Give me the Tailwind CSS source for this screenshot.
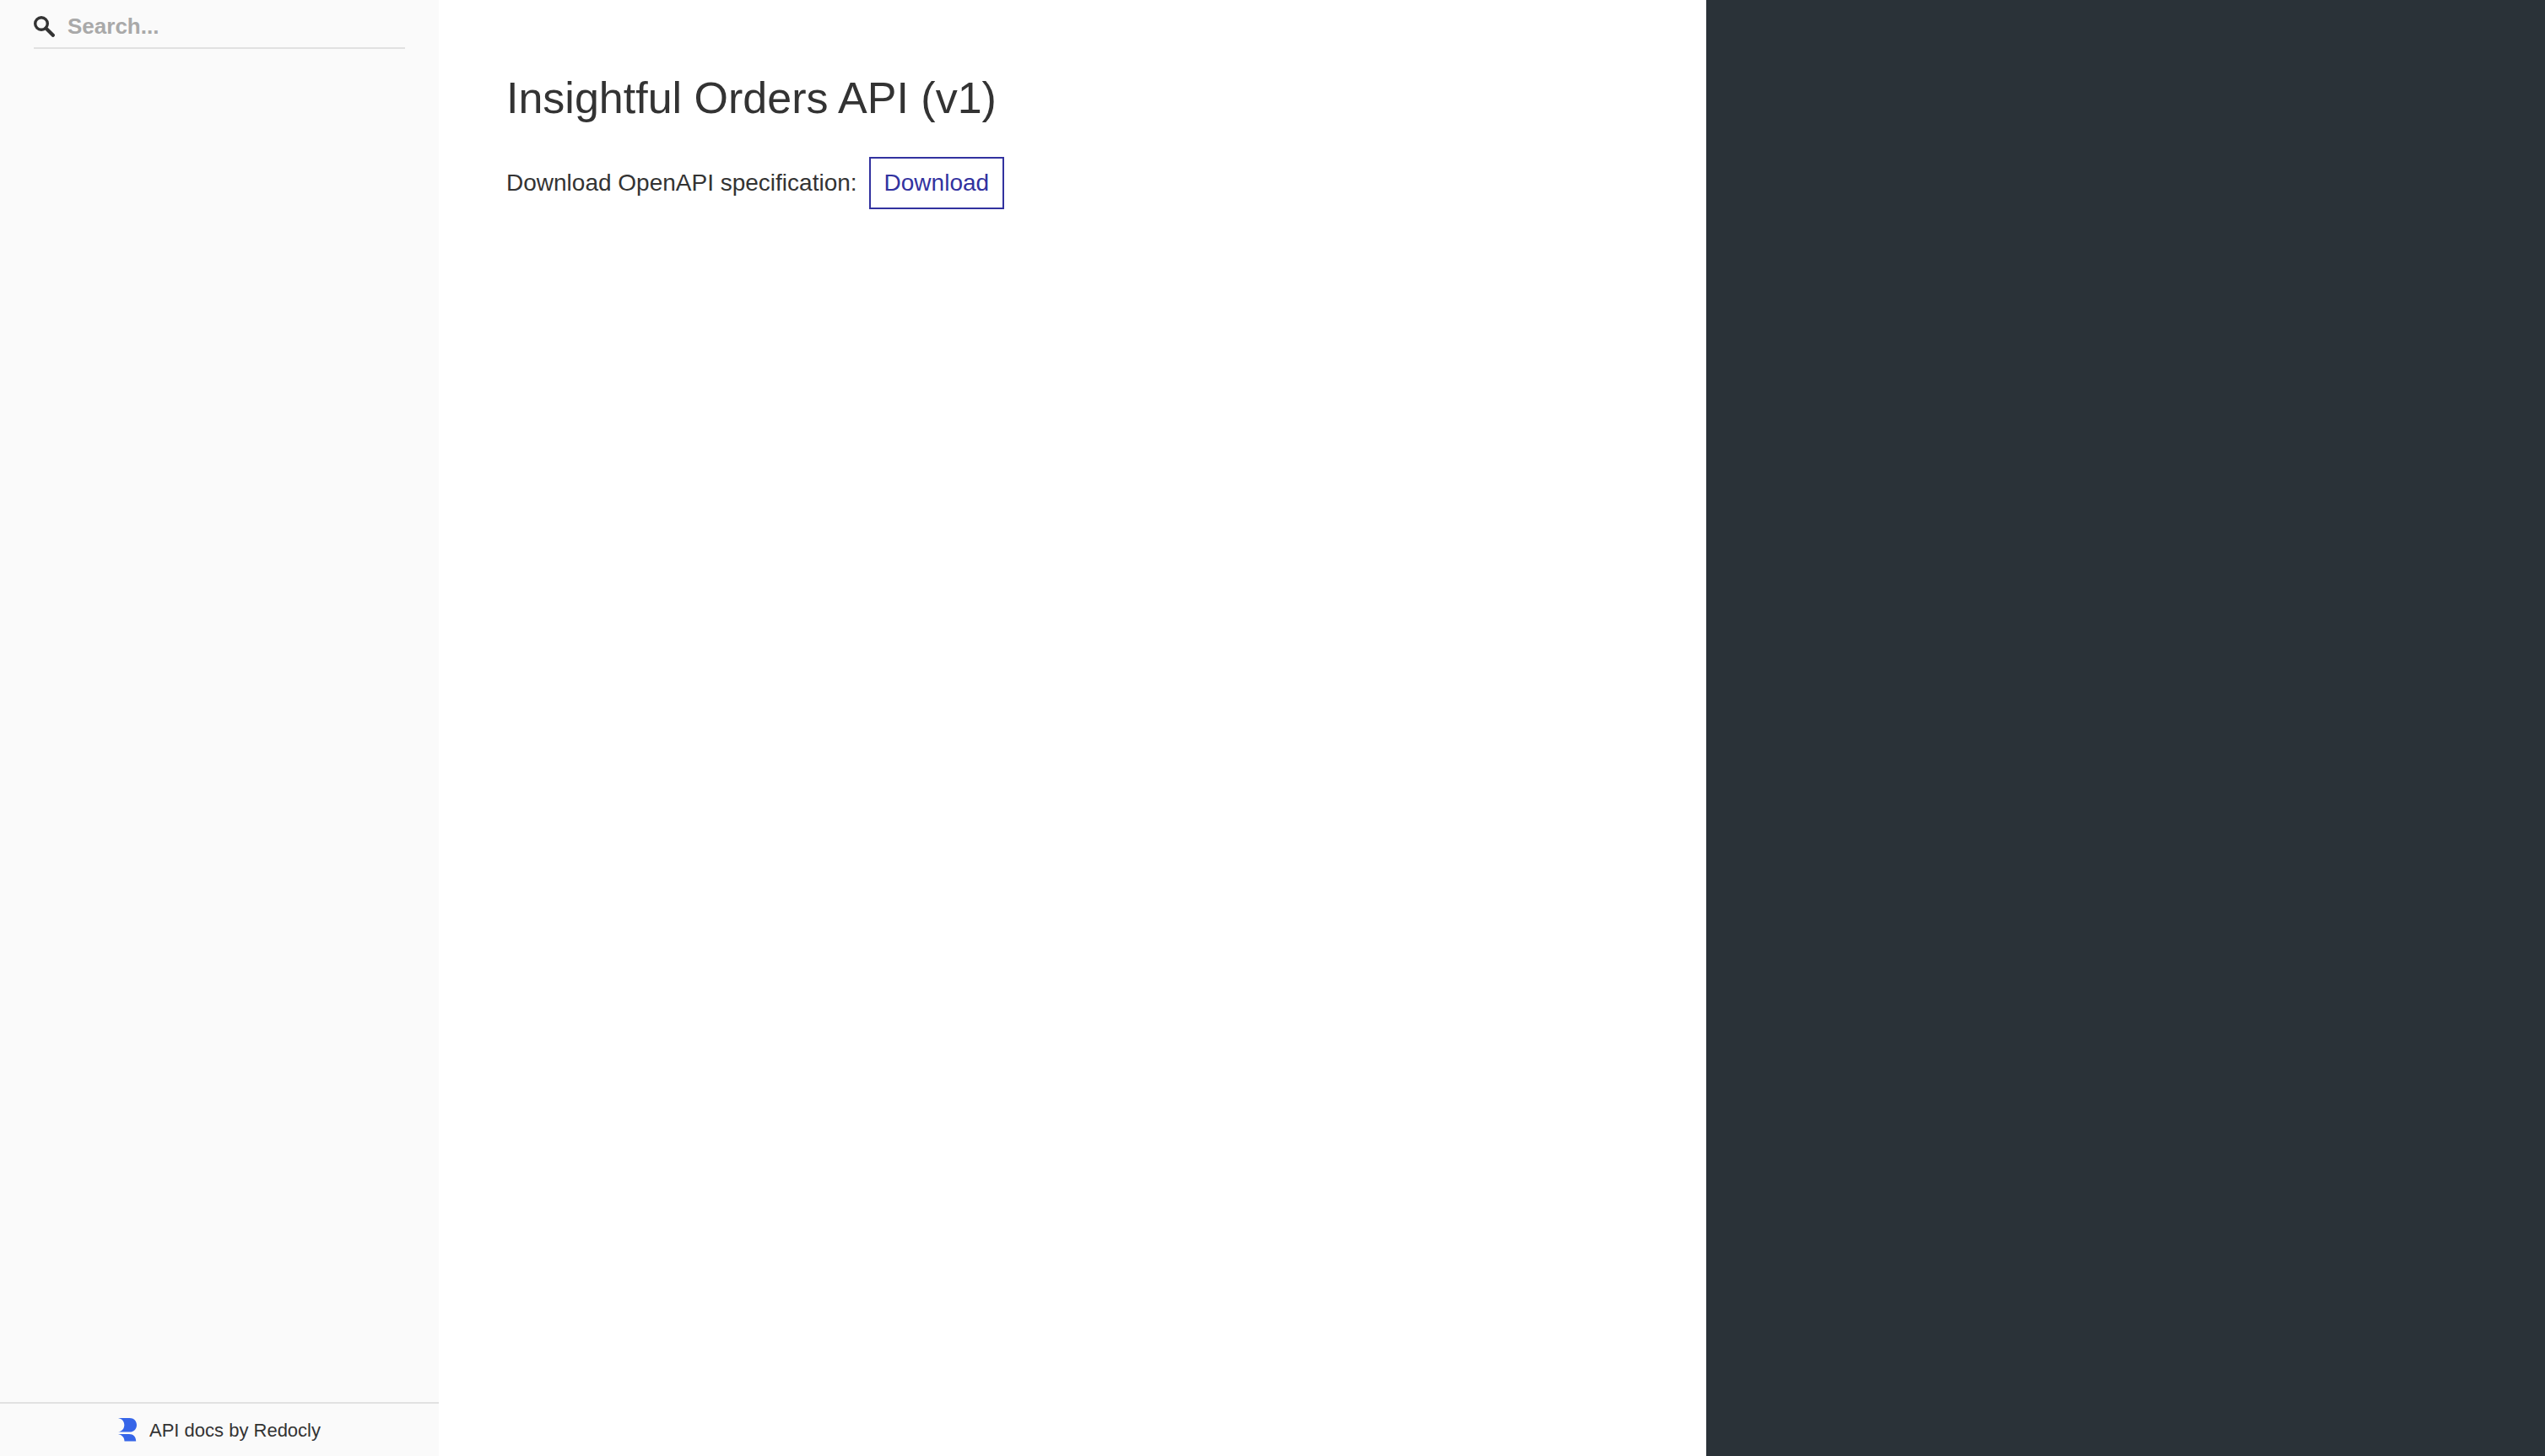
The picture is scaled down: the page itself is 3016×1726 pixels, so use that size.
<!DOCTYPE html>
<html lang="en">
<head>
<meta charset="utf-8">
<title>Insightful Orders API</title>
<script src="https://cdn.jsdelivr.net/npm/@tailwindcss/browser@4"></script>
</head>
<body class="flex min-h-screen bg-white font-['Liberation_Sans',Arial,sans-serif] text-[#333333]">
  <aside class="flex w-[520px] shrink-0 flex-col bg-[#fafafa]">
    <label class="mx-10 flex h-[58px] items-center gap-[15px] border-b-2 border-[#e1e1e1] pt-1.5">
      <svg class="size-[25px] shrink-0" viewBox="0 0 25 25" fill="none" stroke="#333333" aria-hidden="true"><circle cx="9" cy="9" r="7.300" stroke-width="3.400"/><path d="M14.500 14.500l8.300 8.300" stroke-width="4.200" stroke-linecap="round"/></svg>
      <input type="text" aria-label="Search" placeholder="Search..." class="min-w-0 grow bg-transparent text-[26px] font-bold outline-none placeholder:text-[#a9a9a9]">
    </label>
    <footer class="mt-auto flex h-16 items-center justify-center border-t-2 border-[#e1e1e1]">
      <a href="#" class="flex items-center gap-[15px] text-[22px]">
        <svg class="h-7 w-[22px]" viewBox="0 0 22 28" fill="#3665e8" aria-hidden="true"><path d="M0 0h13.500C18.500 0 22 3.500 22 8.200S18.500 16.500 13.500 16.500H0C4.500 16 7.300 12.700 7.300 8.300S4.500.8 0 0z"/><path d="M0 19h13c5 0 8.200 3.300 8.200 8.500H7.500C7.500 23 4.500 20 0 19z"/></svg>
        API docs by Redocly
      </a>
    </footer>
  </aside>
  <main class="grow px-20 pt-20">
    <h1 class="text-[52px] leading-[72px]">Insightful Orders API (v1)</h1>
    <p class="mt-[34px] flex items-center gap-3.5 text-[28px]">Download OpenAPI specification:
      <a href="#" class="border-2 border-[#32329f] px-4 py-2 text-[#32329f]">Download</a>
    </p>
  </main>
  <div class="w-[calc((100%-530px)*0.4)] shrink-0 bg-[#2a3238]"></div>
</body>
</html>
